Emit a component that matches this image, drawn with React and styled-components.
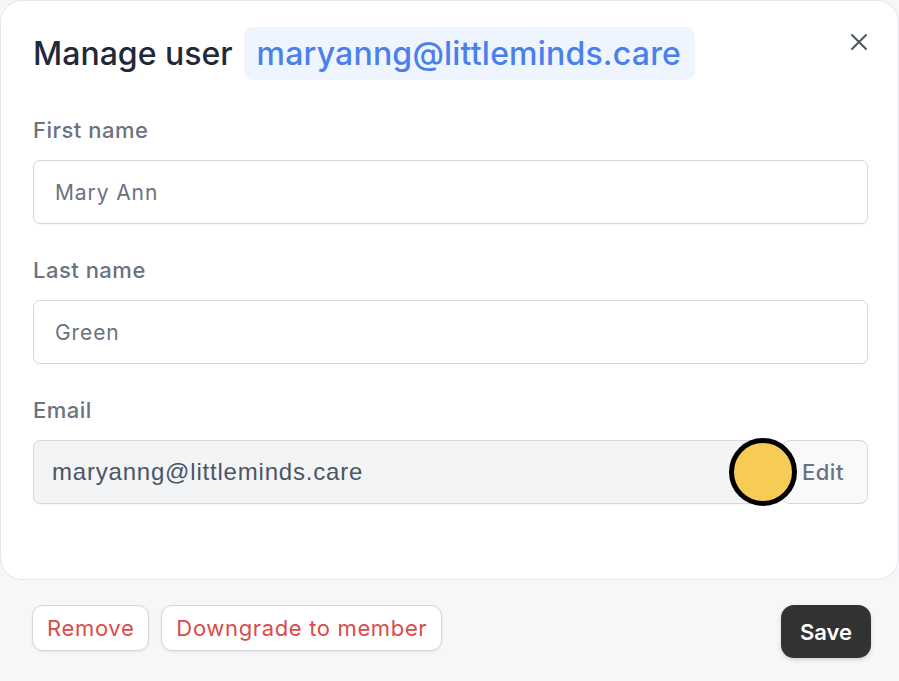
import React from "react";
import styled, { createGlobalStyle } from "styled-components";

const Global = createGlobalStyle`
  html, body {
    margin: 0;
    padding: 0;
    background: #f6f7f9;
    font-family: Inter, "Noto Sans", sans-serif;
  }
  * { box-sizing: border-box; }
`;

const Page = styled.div`
  width: 899px;
  height: 681px;
  display: flex;
  flex-direction: column;
  background: #f6f7f9;
  overflow: hidden;
`;

const Card = styled.div`
  background: #fff;
  border: 1px solid #e3e5e8;
  border-radius: 22px;
  padding: 26px 30px 75px 32px;
  display: flex;
  flex-direction: column;
`;

const Header = styled.div`
  display: flex;
  align-items: center;
  justify-content: space-between;
  margin-bottom: 36px;
`;

const Title = styled.h1`
  margin: 0;
  display: flex;
  align-items: center;
  gap: 11px;
  font-size: 32px;
  font-weight: 500;
  color: #1f2937;
`;

const Badge = styled.span`
  display: inline-flex;
  align-items: center;
  height: 53px;
  padding: 0 14px 0 13px;
  border-radius: 9px;
  background: #eef5ff;
  color: #4a80ea;
  font-weight: 500;
  letter-spacing: 0.2px;
`;

const Close = styled.button`
  border: none;
  background: none;
  padding: 0;
  align-self: flex-start;
  margin: 6px 0 0 0;
  width: 18px;
  height: 18px;
  color: #4b5563;
  display: flex;
`;

const Field = styled.div`
  display: flex;
  flex-direction: column;
  gap: 16px;
  & + & {
    margin-top: 32px;
  }
`;

const Label = styled.label`
  font-size: 22px;
  line-height: 28px;
  font-weight: 500;
  letter-spacing: 0.5px;
  color: #6b7280;
`;

const Input = styled.div`
  height: 64px;
  flex: ${(p) => (p.$grow ? 1 : "none")};
  display: flex;
  align-items: center;
  padding: 0 ${(p) => (p.$disabled ? 18 : 21)}px;
  border: 1.5px solid #d4d7dc;
  border-radius: 7px;
  background: ${(p) => (p.$disabled ? "#f3f4f6" : "#fff")};
  color: ${(p) => (p.$disabled ? "#4b5563" : "#6b7280")};
  font-size: ${(p) => (p.$disabled ? 24 : 21)}px;
  letter-spacing: ${(p) => (p.$disabled ? 0.8 : 0.9)}px;
  font-family: ${(p) =>
    p.$disabled ? '"Liberation Sans", Arial, sans-serif' : "Inter, sans-serif"};
  box-shadow: 0 1px 2px rgba(0, 0, 0, 0.04);
`;

const InputGroup = styled.div`
  display: flex;
  position: relative;
`;

const EditButton = styled.button`
  width: 88px;
  height: 64px;
  margin-left: -2px;
  border: 1.5px solid #d4d7dc;
  border-radius: 10px 8px 8px 10px;
  background: #f8f9fb;
  color: #6b7280;
  font-family: Inter, sans-serif;
  font-size: 22px;
  font-weight: 500;
  letter-spacing: 0.5px;
  text-align: left;
  padding: 0 0 0 21px;
`;

const Cursor = styled.div`
  position: absolute;
  left: 696px;
  top: -2px;
  width: 68px;
  height: 68px;
  border-radius: 50%;
  background: #f6cb56;
  border: 5px solid #000;
`;

const Footer = styled.div`
  display: flex;
  justify-content: space-between;
  align-items: flex-start;
  padding: 25px 28px 0 32px;
`;

const Actions = styled.div`
  display: flex;
  gap: 12px;
`;

const GhostButton = styled.button`
  height: 46px;
  padding: 0 14px;
  border: 1.5px solid #d4d7dc;
  border-radius: 11px;
  background: #fff;
  color: #dc4a48;
  font-family: Inter, sans-serif;
  font-size: 22px;
  font-weight: 400;
  letter-spacing: 0.65px;
  box-shadow: 0 1px 3px rgba(0, 0, 0, 0.08);
`;

const SaveButton = styled.button`
  height: 53px;
  padding: 0 19px;
  border: none;
  border-radius: 13px;
  background: #323232;
  color: #fff;
  font-family: Inter, sans-serif;
  font-size: 22px;
  font-weight: 600;
  box-shadow: 0 2px 4px rgba(0, 0, 0, 0.15);
`;

export default function App() {
  return (
    <>
      <Global />
      <Page>
        <Card>
          <Header>
            <Title>
              Manage user <Badge>maryanng@littleminds.care</Badge>
            </Title>
            <Close aria-label="Close">
              <svg width="18" height="18" viewBox="0 0 18 18" fill="none">
                <path
                  d="M2 2L16 16M16 2L2 16"
                  stroke="currentColor"
                  strokeWidth="2"
                  strokeLinecap="round"
                />
              </svg>
            </Close>
          </Header>
          <Field>
            <Label>First name</Label>
            <Input>Mary Ann</Input>
          </Field>
          <Field>
            <Label>Last name</Label>
            <Input>Green</Input>
          </Field>
          <Field>
            <Label>Email</Label>
            <InputGroup>
              <Input $disabled $grow>
                maryanng@littleminds.care
              </Input>
              <EditButton>Edit</EditButton>
              <Cursor />
            </InputGroup>
          </Field>
        </Card>
        <Footer>
          <Actions>
            <GhostButton>Remove</GhostButton>
            <GhostButton>Downgrade to member</GhostButton>
          </Actions>
          <SaveButton>Save</SaveButton>
        </Footer>
      </Page>
    </>
  );
}
